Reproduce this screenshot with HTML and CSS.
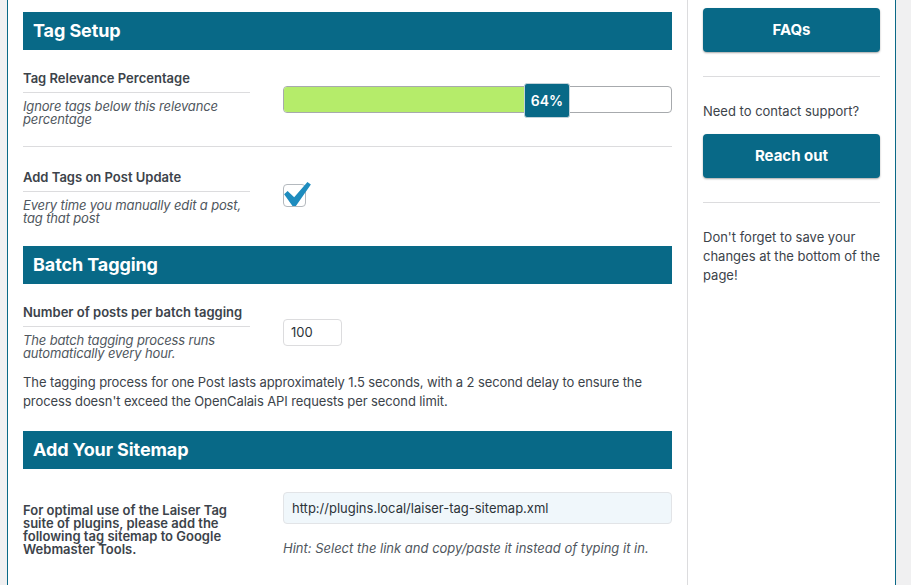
FILE: index.html
```html
<!DOCTYPE html>
<html>
<head>
<meta charset="utf-8">
<link rel="stylesheet" href="styles.css">
</head>
<body>
<div class="wrap">
  <main class="main">
    <h2 class="section-head">Tag Setup</h2>
    <div class="row">
      <div class="label-col">
        <div class="label">Tag Relevance Percentage</div>
        <div class="desc">Ignore tags below this relevance percentage</div>
      </div>
      <div class="field-col">
        <div class="slider">
          <div class="slider-fill" style="width: 62%"></div>
          <div class="slider-handle">64%</div>
        </div>
      </div>
    </div>
    <div class="divider"></div>
    <div class="row row-second">
      <div class="label-col">
        <div class="label">Add Tags on Post Update</div>
        <div class="desc">Every time you manually edit a post, tag that post</div>
      </div>
      <div class="field-col">
        <div class="checkbox">
          <svg class="check" viewBox="5.78 4.89 10.39 9.32" width="27" height="24"><path d="M14.83 4.89l1.34.94-5.81 8.38H9.02L5.78 9.67l1.34-1.25 2.57 2.4z" fill="#1e8cbe"/></svg>
        </div>
      </div>
    </div>

    <h2 class="section-head">Batch Tagging</h2>
    <div class="row">
      <div class="label-col">
        <div class="label">Number of posts per batch tagging</div>
        <div class="desc">The batch tagging process runs automatically every hour.</div>
      </div>
      <div class="field-col">
        <div class="num-input">100</div>
      </div>
    </div>
    <p class="note">The tagging process for one Post lasts approximately 1.5 seconds, with a 2 second delay to ensure the process doesn't exceed the OpenCalais API requests per second limit.</p>

    <h2 class="section-head">Add Your Sitemap</h2>
    <div class="row row-sitemap">
      <div class="label-col">
        <div class="sitemap-label">For optimal use of the Laiser Tag suite of plugins, please add the following tag sitemap to Google Webmaster Tools.</div>
      </div>
      <div class="field-col">
        <div class="url-input">http://plugins.local/laiser-tag-sitemap.xml</div>
        <div class="hint">Hint: Select the link and copy/paste it instead of typing it in.</div>
      </div>
    </div>
  </main>
  <aside class="sidebar">
    <a class="btn">FAQs</a>
    <div class="side-rule"></div>
    <p class="side-text first">Need to contact support?</p>
    <a class="btn">Reach out</a>
    <div class="side-rule"></div>
    <p class="side-text last">Don't forget to save your changes at the bottom of the page!</p>
  </aside>
</div>
</body>
</html>
```

FILE: styles.css
```css
html, body {
  margin: 0;
  padding: 0;
  background: #f0f0f1;
  font-family: Inter, "Open Sans", "Liberation Sans", sans-serif;
  color: #3c434a;
  font-size: 13px;
  overflow: hidden;
}

.wrap {
  margin-left: 7px;
  width: 887px;
  min-height: 585px;
  background: #fff;
  border-left: 1px solid #0a6987;
  border-right: 1px solid #0a6987;
  display: flex;
  align-items: stretch;
}

.main {
  width: 649px;
  padding: 12px 15px 0 15px;
}

.section-head {
  margin: 0;
  height: 38px;
  line-height: 38px;
  background: #086987;
  color: #fff;
  font-size: 18px;
  font-weight: 700;
  padding-left: 10px;
  letter-spacing: -0.1px;
}

.row {
  display: grid;
  grid-template-columns: 227px 1fr;
  column-gap: 33px;
  padding-top: 20px;
}

.row-second {
  padding-top: 22px;
  padding-bottom: 21px;
}

.label {
  font-weight: 600;
  line-height: 16px;
  padding-bottom: 6px;
  border-bottom: 1px solid #dcdcde;
}

.desc {
  margin-top: 7px;
  font-style: italic;
  line-height: 13px;
  color: #50575e;
  letter-spacing: -0.15px;
}

.slider {
  position: relative;
  margin-top: 16px;
  height: 25px;
  border: 1px solid #a7aaad;
  border-radius: 4px;
  background: #fff;
}

.slider-fill {
  height: 100%;
  background: #b5ec6a;
  border-radius: 3px 0 0 3px;
}

.slider-handle {
  position: absolute;
  left: 240px;
  top: -4px;
  width: 44px;
  height: 33px;
  line-height: 33px;
  background: #086987;
  border: 1px solid #c3d3da;
  border-radius: 3px;
  color: #fff;
  font-weight: 600;
  font-size: 14px;
  text-align: center;
  box-sizing: content-box;
}

.divider {
  margin-top: 20px;
  border-top: 1px solid #dcdcde;
}

.checkbox {
  position: relative;
  margin-top: 15px;
  width: 21px;
  height: 21px;
  border: 1px solid #b4b9be;
  border-radius: 4px;
  background: #fff;
}

.check {
  position: absolute;
  left: 0px;
  top: -3px;
}

.num-input {
  margin-top: 15px;
  width: 50px;
  height: 25px;
  line-height: 25px;
  border: 1px solid #dcdcde;
  border-radius: 4px;
  padding-left: 7px;
  color: #2c3338;
}

.note {
  margin: 13px 0 0 0;
  line-height: 19px;
  padding-bottom: 20px;
  letter-spacing: -0.1px;
}

.row-sitemap {
  padding-top: 23px;
}

.sitemap-label {
  margin-top: 12px;
  font-weight: 600;
  line-height: 13px;
}

.url-input {
  height: 30px;
  line-height: 30px;
  border: 1px solid #e2e4e7;
  border-radius: 4px;
  background: #f0f7fb;
  padding-left: 8px;
  color: #2c3338;
}

.hint {
  margin-top: 16px;
  font-style: italic;
  color: #50575e;
  line-height: 16px;
}

.sidebar {
  width: 177px;
  border-left: 1px solid #dcdcde;
  padding: 8px 15px 0 15px;
}

.btn {
  display: block;
  height: 44px;
  line-height: 44px;
  background: #086987;
  color: #fff;
  font-weight: 700;
  font-size: 15px;
  text-align: center;
  border-radius: 4px;
  box-shadow: 0 1px 2px rgba(0, 0, 0, 0.35);
}

.side-rule {
  margin-top: 24px;
  border-top: 1px solid #dcdcde;
}

.side-text {
  margin: 0;
  line-height: 19px;
}

.side-text.first {
  margin-top: 25px;
  margin-bottom: 13px;
}

.side-text.last {
  margin-top: 25px;
}
```
